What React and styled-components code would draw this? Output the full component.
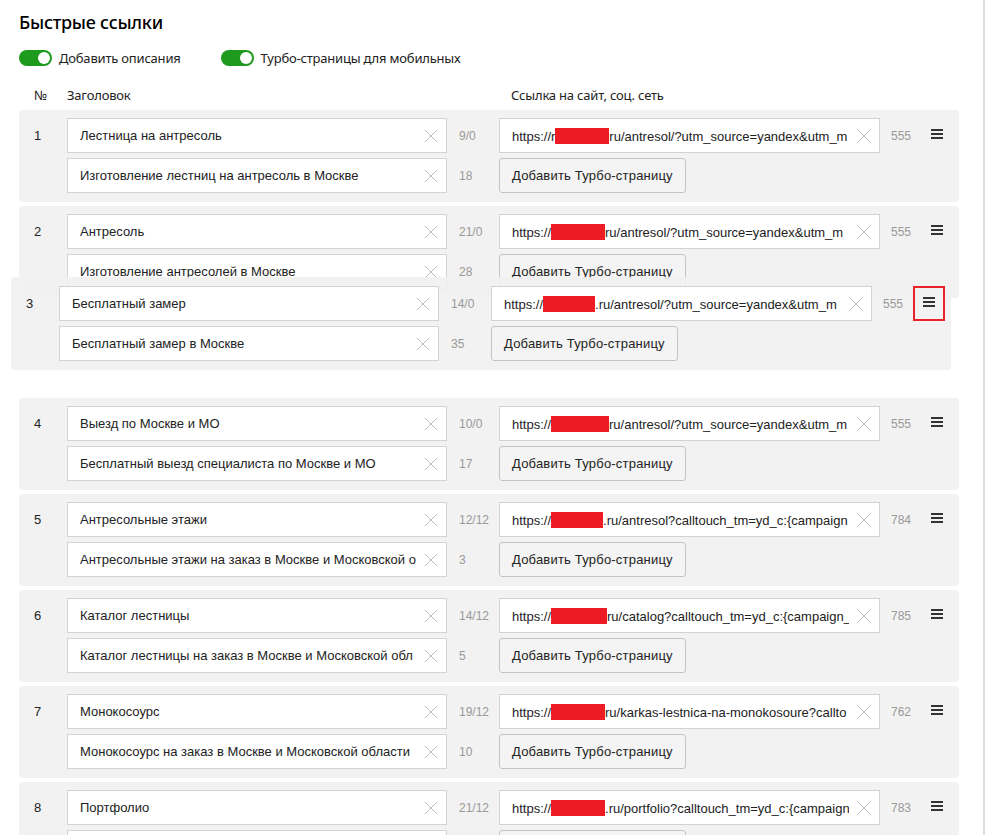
import React from 'react';
import styled, { createGlobalStyle, css } from 'styled-components';

const GlobalStyle = createGlobalStyle`
  html, body {
    margin: 0;
    padding: 0;
    background: #fff;
    overflow: hidden;
  }
  body {
    font-family: "Liberation Sans", Arial, sans-serif;
    color: #000;
  }
`;

const Page = styled.div`
  box-sizing: border-box;
  width: 985px;
  min-height: 835px;
  padding: 10px 0 0 19px;
  border-right: 2px solid #dcdcdc;
`;

const Title = styled.h2`
  margin: 0;
  font-family: "Noto Sans", "Open Sans", sans-serif;
  font-size: 18px;
  line-height: 24px;
  font-weight: 500;
  letter-spacing: -0.25px;
  color: #000;
`;

const Toggles = styled.div`
  display: flex;
  align-items: center;
  gap: 40px;
  margin-top: 16px;
  height: 16px;
`;

const ToggleLabel = styled.label`
  display: flex;
  align-items: center;
  gap: 7px;
  font-family: "Noto Sans", "Open Sans", sans-serif;
  font-size: 13px;
  letter-spacing: -0.2px;
  color: #222;
`;

const Switch = styled.span`
  position: relative;
  width: 33px;
  height: 16px;
  border-radius: 8px;
  background: #1e9b1e;

  &::after {
    content: '';
    position: absolute;
    right: 2px;
    top: 2px;
    width: 12px;
    height: 12px;
    border-radius: 50%;
    background: #fff;
  }
`;

const columns = css`
  display: grid;
  grid-template-columns: 33px 380px 52px 381px 41px 32px;
`;

const HeadRow = styled.div`
  ${columns};
  margin-top: 21px;
  padding-left: 15px;
  font-family: "Noto Sans", "Open Sans", sans-serif;
  font-size: 13px;
  line-height: 16px;
  letter-spacing: -0.2px;
  color: #222;
`;

const HeadLink = styled.span`
  padding-left: 12px;
  white-space: nowrap;
`;

const List = styled.div`
  position: relative;
  margin-top: 7px;
  width: 940px;
  display: flex;
  flex-direction: column;
  gap: 4px;
`;

const Card = styled.div`
  ${columns};
  box-sizing: border-box;
  width: 940px;
  height: 92px;
  grid-template-rows: 35px 35px;
  row-gap: 5px;
  align-items: center;
  padding: 8px 0 0 15px;
  background: #f2f2f2;
  border-radius: 4px;

  ${(p) =>
    p.$dragged &&
    css`
      position: absolute;
      z-index: 2;
      top: 167px;
      left: -8px;
      height: 93px;
      padding-top: 9px;
      background: rgba(240, 240, 240, 0.88);
    `}
`;

const Slot = styled.div`
  height: 92px;
`;

const Num = styled.span`
  font-size: 13px;
  color: #222;
`;

const Field = styled.div`
  box-sizing: border-box;
  display: flex;
  align-items: center;
  height: 35px;
  padding-left: 12px;
  background: #fff;
  border: 1px solid #d3d3d3;
`;

const FieldText = styled.span`
  flex: 1;
  overflow: hidden;
  white-space: nowrap;
  font-size: 13px;
  color: #222;
`;

const Hidden = styled.span`
  display: inline-block;
  height: 16px;
  vertical-align: -3px;
  background: #ed1c24;
`;

const Clear = styled.svg`
  flex: none;
  width: 14px;
  height: 14px;
  margin: 0 8px 0 8px;
`;

const Counter = styled.span`
  padding-left: ${(p) => p.$pad || 12}px;
  font-size: 12px;
  color: #999;
`;

const TurboButton = styled.button`
  justify-self: start;
  box-sizing: border-box;
  width: 187px;
  height: 35px;
  padding: 0 0 0 12px;
  text-align: left;
  font-family: "Liberation Sans", Arial, sans-serif;
  font-size: 13px;
  letter-spacing: 0.2px;
  color: #222;
  background: #f4f4f4;
  border: 1px solid #c4c4c4;
  border-radius: 3px;
`;

const Handle = styled.span`
  box-sizing: border-box;
  display: flex;
  align-items: center;
  justify-content: center;
  width: 32px;
  height: 35px;
  padding-bottom: 4px;
  border: 2px solid ${(p) => (p.$active ? '#e8232a' : 'transparent')};
`;

const ClearIcon = () => (
  <Clear viewBox="0 0 14 14">
    <path d="M1 1L13 13M13 1L1 13" stroke="#bcbcbc" strokeWidth="1" fill="none" />
  </Clear>
);

const MenuIcon = () => (
  <svg width="12" height="10" viewBox="0 0 12 10">
    <rect x="0" y="0" width="12" height="2" fill="#333" />
    <rect x="0" y="4" width="12" height="2" fill="#333" />
    <rect x="0" y="8" width="12" height="2" fill="#333" />
  </svg>
);

const rows = [
  {
    n: 1, title: 'Лестница на антресоль', tc: '9/0',
    desc: 'Изготовление лестниц на антресоль в Москве', dc: '18',
    pre: 'https://r', red: 54, post: 'ru/antresol/?utm_source=yandex&utm_m', len: '555',
  },
  {
    n: 2, title: 'Антресоль', tc: '21/0',
    desc: 'Изготовление антресолей в Москве', dc: '28',
    pre: 'https://', red: 54, post: 'ru/antresol/?utm_source=yandex&utm_m', len: '555',
  },
  {
    n: 3, title: 'Бесплатный замер', tc: '14/0',
    desc: 'Бесплатный замер в Москве', dc: '35',
    pre: 'https://', red: 52, post: '.ru/antresol/?utm_source=yandex&utm_m', len: '555',
    dragged: true,
  },
  {
    n: 4, title: 'Выезд по Москве и МО', tc: '10/0',
    desc: 'Бесплатный выезд специалиста по Москве и МО', dc: '17',
    pre: 'https://', red: 58, post: 'ru/antresol/?utm_source=yandex&utm_m', len: '555',
  },
  {
    n: 5, title: 'Антресольные этажи', tc: '12/12',
    desc: 'Антресольные этажи на заказ в Москве и Московской о', dc: '3',
    pre: 'https://', red: 52, post: '.ru/antresol?calltouch_tm=yd_c:{campaign', len: '784',
  },
  {
    n: 6, title: 'Каталог лестницы', tc: '14/12',
    desc: 'Каталог лестницы на заказ в Москве и Московской обл', dc: '5',
    pre: 'https://', red: 56, post: 'ru/catalog?calltouch_tm=yd_c:{campaign_', len: '785',
  },
  {
    n: 7, title: 'Монокосоурс', tc: '19/12',
    desc: 'Монокосоурс на заказ в Москве и Московской области', dc: '10',
    pre: 'https://', red: 54, post: 'ru/karkas-lestnica-na-monokosoure?callto', len: '762',
  },
  {
    n: 8, title: 'Портфолио', tc: '21/12',
    desc: 'Портфолио наших работ', dc: '21',
    pre: 'https://', red: 54, post: '.ru/portfolio?calltouch_tm=yd_c:{campaign', len: '783',
  },
];

const LinkCard = ({ row }) => (
  <Card $dragged={row.dragged}>
    <Num>{row.n}</Num>
    <Field>
      <FieldText>{row.title}</FieldText>
      <ClearIcon />
    </Field>
    <Counter>{row.tc}</Counter>
    <Field>
      <FieldText>
        {row.pre}
        <Hidden style={{ width: row.red }} />
        {row.post}
      </FieldText>
      <ClearIcon />
    </Field>
    <Counter $pad={11}>{row.len}</Counter>
    <Handle $active={row.dragged}>
      <MenuIcon />
    </Handle>

    <span />
    <Field>
      <FieldText>{row.desc}</FieldText>
      <ClearIcon />
    </Field>
    <Counter>{row.dc}</Counter>
    <TurboButton>Добавить Турбо-страницу</TurboButton>
  </Card>
);

const App = () => (
  <Page>
    <GlobalStyle />
    <Title>Быстрые ссылки</Title>
    <Toggles>
      <ToggleLabel>
        <Switch />
        Добавить описания
      </ToggleLabel>
      <ToggleLabel>
        <Switch />
        Турбо-страницы для мобильных
      </ToggleLabel>
    </Toggles>
    <HeadRow>
      <span>№</span>
      <span>Заголовок</span>
      <span />
      <HeadLink>Ссылка на сайт, соц. сеть</HeadLink>
    </HeadRow>
    <List>
      {rows.map((row) =>
        row.dragged ? (
          <React.Fragment key={row.n}>
            <Slot />
            <LinkCard row={row} />
          </React.Fragment>
        ) : (
          <LinkCard key={row.n} row={row} />
        )
      )}
    </List>
  </Page>
);

export default App;
